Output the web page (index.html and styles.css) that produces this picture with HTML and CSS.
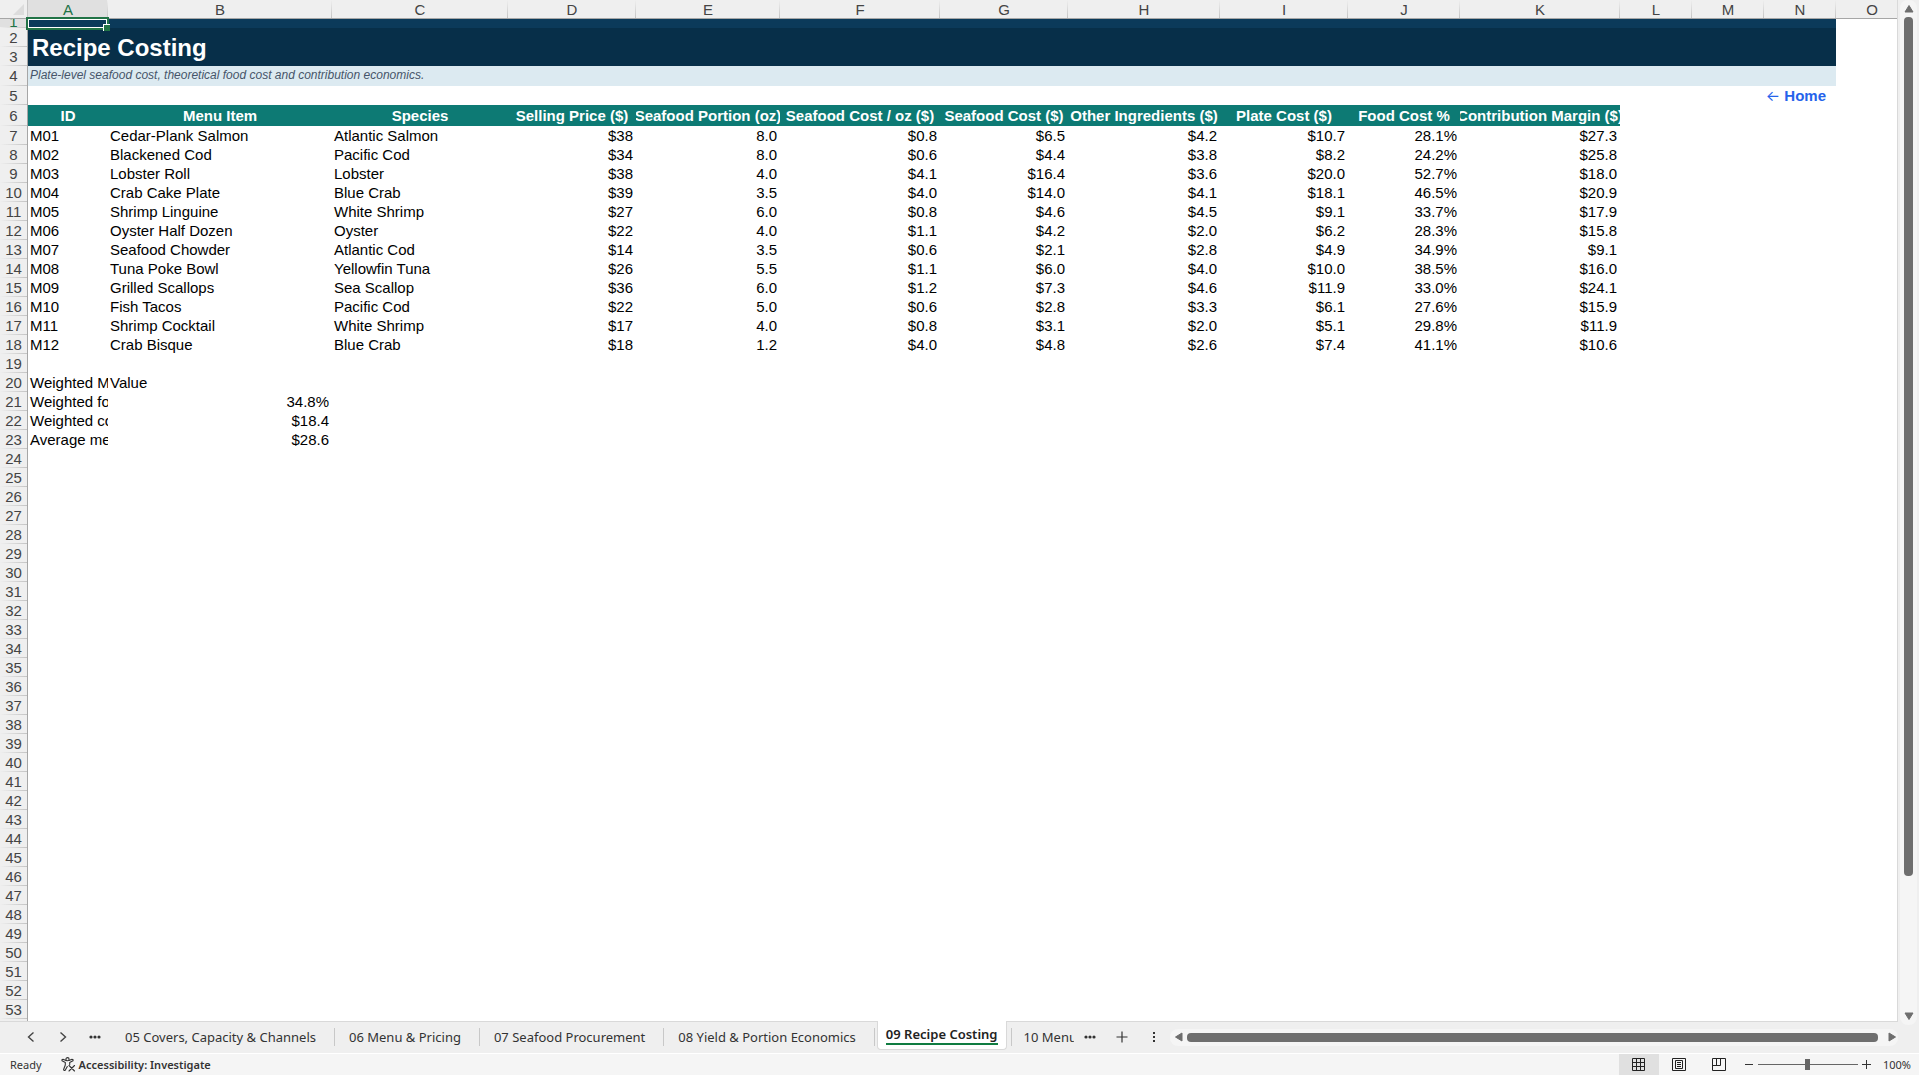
FILE: index.html
```html
<!DOCTYPE html>
<html lang="en">
<head>
    <meta charset="UTF-8">
    <meta name="viewport" content="width=device-width, initial-scale=1.0">
    <title>Recipe Costing</title>
    <link rel="stylesheet" href="styles.css">
</head>
<body>
    <div class="workbook">
        <main class="sheet">
            <table class="grid">
                <colgroup>
                    <col class="w-head"><col class="w-a"><col class="w-b"><col class="w-c"><col class="w-d"><col class="w-e"><col class="w-f"><col class="w-d"><col class="w-h"><col class="w-d"><col class="w-j"><col class="w-f"><col class="w-l"><col class="w-l"><col class="w-l"><col>
                </colgroup>
                <thead>
                    <tr>
                        <th class="corner"><svg width="12" height="12" viewBox="0 0 12 12"><path d="M11 0v11H0z" fill="#dcdcdc"/></svg></th>
                        <th class="active">A</th><th>B</th><th>C</th><th>D</th><th>E</th><th>F</th><th>G</th><th>H</th><th>I</th><th>J</th><th>K</th><th>L</th><th>M</th><th>N</th><th>O</th>
                    </tr>
                </thead>
                <tbody id="rows">
                    <tr class="row-thin">
                        <th class="active"><div>1</div></th>
                        <td class="band cell-active"><div class="selection"></div></td>
                        <td class="band" colspan="13"></td>
                        <td></td>
                    </tr>
                    <tr>
                        <th>2</th>
                        <td class="title" colspan="14" rowspan="2"><h1>Recipe Costing</h1></td>
                        <td></td>
                    </tr>
                    <tr><th>3</th><td></td></tr>
                    <tr class="row-sub">
                        <th>4</th>
                        <td class="subtitle" colspan="14">Plate-level seafood cost, theoretical food cost and contribution economics.</td>
                        <td></td>
                    </tr>
                    <tr>
                        <th>5</th>
                        <td colspan="13"></td>
                        <td class="home"><a href="#home"><span class="arrow">←</span> Home</a></td>
                        <td></td>
                    </tr>
                    <tr class="row-labels">
                        <th>6</th>
                        <td><div>ID</div></td><td><div>Menu Item</div></td><td><div>Species</div></td><td><div>Selling Price ($)</div></td><td><div>Seafood Portion (oz)</div></td><td><div>Seafood Cost / oz ($)</div></td><td><div>Seafood Cost ($)</div></td><td><div>Other Ingredients ($)</div></td><td><div>Plate Cost ($)</div></td><td><div>Food Cost %</div></td><td><div>Contribution Margin ($)</div></td>
                    </tr>
                </tbody>
            </table>
        </main>

        <div class="vscroll">
            <svg width="10" height="8" viewBox="0 0 10 8"><path d="M5 0.5L9 7H1z" fill="#6e6e6e" stroke="#6e6e6e" stroke-linejoin="round"/></svg>
            <div class="vthumb"></div>
            <div class="vrest"></div>
            <svg width="10" height="8" viewBox="0 0 10 8"><path d="M1 1h8L5 7.5z" fill="#6e6e6e" stroke="#6e6e6e" stroke-linejoin="round"/></svg>
        </div>

        <div class="tabbar">
            <div class="tab-nav">
                <button aria-label="Previous sheet"><svg width="10" height="12" viewBox="0 0 10 12"><path d="M7.500 1.500L2.500 6l5 4.500" fill="none" stroke="#444" stroke-width="1.400"/></svg></button>
                <button aria-label="Next sheet"><svg width="10" height="12" viewBox="0 0 10 12"><path d="M2.500 1.500L7.500 6l-5 4.500" fill="none" stroke="#444" stroke-width="1.400"/></svg></button>
                <button aria-label="More sheets"><svg width="12" height="4" viewBox="0 0 12 4" fill="#333"><circle cx="2" cy="2" r="1.600"/><circle cx="6" cy="2" r="1.600"/><circle cx="10" cy="2" r="1.600"/></svg></button>
            </div>
            <nav class="tabs">
                <a class="tab" href="#s05">05 Covers, Capacity &amp; Channels</a>
                <a class="tab" href="#s06">06 Menu &amp; Pricing</a>
                <a class="tab" href="#s07">07 Seafood Procurement</a>
                <a class="tab" href="#s08">08 Yield &amp; Portion Economics</a>
                <a class="tab current" href="#s09"><span>09 Recipe Costing</span></a>
                <a class="tab last" href="#s10"><span>10 Menu Engineering</span></a>
            </nav>
            <div class="tab-tools">
                <button aria-label="More tabs"><svg width="12" height="4" viewBox="0 0 12 4" fill="#333"><circle cx="2" cy="2" r="1.600"/><circle cx="6" cy="2" r="1.600"/><circle cx="10" cy="2" r="1.600"/></svg></button>
                <button aria-label="New sheet"><svg width="12" height="12" viewBox="0 0 12 12"><path d="M6 .5v11M.5 6h11" stroke="#333" stroke-width="1.200"/></svg></button>
                <button aria-label="Resize tabs"><svg width="4" height="12" viewBox="0 0 4 12" fill="#333"><path d="M1 1h2v2H1zM1 5h2v2H1zM1 9h2v2H1z"/></svg></button>
            </div>
            <div class="hscroll">
                <svg width="8" height="10" viewBox="0 0 8 10"><path d="M.5 5L7 1v8z" fill="#6e6e6e" stroke="#6e6e6e" stroke-linejoin="round"/></svg>
                <div class="hthumb"></div>
                <svg width="8" height="10" viewBox="0 0 8 10"><path d="M7.500 5L1 1v8z" fill="#6e6e6e" stroke="#6e6e6e" stroke-linejoin="round"/></svg>
            </div>
        </div>
    </div>

    <footer class="status">
        <span class="ready">Ready</span>
        <button class="access">
            <svg width="15" height="15" viewBox="0 0 15 15" fill="none" stroke="#333" stroke-width="1.100" stroke-linecap="round" stroke-linejoin="round"><circle cx="6.500" cy="2.200" r="1.600"/><path d="M5 3.500L2 2.300Q.6 2.300 1 3.700L4.300 5.400V8L2.600 12.500Q3 14 4.200 13.300L6.300 9.500M8 3.500l3-1.200q1.500 0 1 1.400L8.700 5.400v2M8 8.500l5.500 5.500M13.500 8.500L8 14"/></svg>
            Accessibility: Investigate
        </button>
        <div class="views">
            <button class="on" aria-label="Normal"><svg width="14" height="14" viewBox="0 0 14 14" fill="none" stroke="#222"><path d="M.5.500h12v12H.5zM4.500.500v12M8.500.500v12M.5 4.500h12M.5 8.500h12"/></svg></button>
            <button aria-label="Page layout"><svg width="14" height="14" viewBox="0 0 14 14" fill="none" stroke="#222"><path d="M.5.500h13v12H.5zM3.500 2.500h7v8h-7zM5 4.500h4M5 6.500h4M5 8.500h4"/></svg></button>
            <button aria-label="Page break preview"><svg width="14" height="14" viewBox="0 0 14 14" fill="none" stroke="#222"><path d="M.5.500h13v12H.5zM4.500.500v7M8.500.500v7M.5 7.500h8"/></svg></button>
        </div>
        <div class="zoom">
            <button aria-label="Zoom out"><svg width="9" height="9" viewBox="0 0 9 9"><path d="M0 4.500h8" stroke="#333"/></svg></button>
            <input type="range" min="0" max="100" value="50" aria-label="Zoom">
            <button aria-label="Zoom in"><svg width="9" height="9" viewBox="0 0 9 9"><path d="M0 4.500h9M4.500 0v9" stroke="#333"/></svg></button>
            <span>100%</span>
        </div>
    </footer>

    <script src="sheet.js"></script>
</body>
</html>
```
FILE: styles.css
```css
* {
    margin: 0;
    padding: 0;
    box-sizing: border-box;
}

body {
    display: flex;
    flex-direction: column;
    height: 100vh;
    overflow: hidden;
    background: #f5f5f5;
    color: #000;
    font-family: "Liberation Sans", Arial, sans-serif;
    font-size: 15px;
}

button {
    display: flex;
    align-items: center;
    justify-content: center;
    border: none;
    background: none;
    font: inherit;
    color: inherit;
}

a {
    color: inherit;
    text-decoration: none;
}

.workbook {
    flex: 1;
    min-height: 0;
    display: grid;
    grid-template-columns: minmax(0, 1fr) 21px;
    grid-template-rows: minmax(0, 1fr) 32px;
    background: #efefef;
    border-bottom: 1px solid #fff;
}

.sheet {
    overflow: hidden;
    background: #fff;
    border-right: 1px solid #d9d9d9;
}

/* grid, the last column runs on under the scrollbar */
.grid {
    width: calc(100% + 11px);
    table-layout: fixed;
    border-collapse: separate;
    border-spacing: 0;
    white-space: nowrap;
}

.w-head { width: 28px; }
.w-a { width: 80px; }
.w-b { width: 224px; }
.w-c { width: 176px; }
.w-d { width: 128px; }
.w-e { width: 144px; }
.w-f { width: 160px; }
.w-h { width: 152px; }
.w-j { width: 112px; }
.w-l { width: 72px; }

.grid tr {
    height: 19px;
}

.grid td {
    height: 19px;
    padding: 0 3px 0 2px;
    line-height: 17px;
    overflow: hidden;
}

.grid th {
    font-weight: normal;
    color: #444;
    line-height: 18px;
    overflow: hidden;
}

.grid thead th {
    padding-top: 2px;
    line-height: 16px;
    border-bottom: 1px solid #a6a6a6;
    background: linear-gradient(#efefef, #c4c4c4) right / 1px 100% no-repeat #efefef;
}

.grid thead .corner {
    border-right: 1px solid #c4c4c4;
    background: #efefef;
}

.corner svg {
    display: block;
    margin: 0 2px 0 auto;
}

.grid tbody th {
    border-right: 1px solid #a6a6a6;
    background: linear-gradient(to right, #efefef, #c4c4c4) bottom / 100% 1px no-repeat #efefef;
}

.grid thead .active,
.grid tbody .active {
    background-color: #e0e0e0;
    color: #217346;
}

.grid .row-thin,
.grid .row-thin td {
    height: 9px;
    line-height: 0;
}

.row-thin th div {
    height: 9px;
    display: flex;
    align-items: flex-end;
    justify-content: center;
    line-height: 12px;
    overflow: hidden;
}

.band {
    background: #0b3a5a;
}

.grid .cell-active {
    position: relative;
    overflow: visible;
}

.selection {
    position: absolute;
    inset: -2px -1px -2px -2px;
    border: 2px solid #217346;
    outline: 1px solid #fff;
    outline-offset: -3px;
}

.selection::after {
    content: "";
    position: absolute;
    right: -3px;
    bottom: -3px;
    width: 6px;
    height: 6px;
    background: #217346;
    border-top: 1px solid #fff;
    border-left: 1px solid #fff;
}

.grid .title {
    padding: 2px 4px 0;
    background: #072f49;
    color: #fff;
}

.title h1 {
    font-size: 24px;
    line-height: 36px;
}

.grid .row-sub td {
    height: 20px;
}

.grid .subtitle {
    background: #dceaf1;
    color: #475569;
    font-size: 12px;
    font-style: italic;
    line-height: 19px;
    vertical-align: top;
}

.grid .home {
    padding: 0 10px 0 0;
    text-align: right;
    color: #2563eb;
    font-weight: bold;
}

.arrow {
    font-family: Inter, sans-serif;
    font-weight: normal;
    line-height: 1;
}

.grid .row-labels td {
    height: 21px;
    padding: 0;
    background: #0d7a74;
    color: #fff;
    font-weight: bold;
}

.row-labels div {
    display: flex;
    justify-content: center;
    overflow: hidden;
}

.grid .num {
    text-align: right;
}

/* scrollbars */
.vscroll {
    grid-column: 2;
    grid-row: 1 / 3;
    display: flex;
    flex-direction: column;
    align-items: center;
    width: 17px;
    margin: 0 2px 28px;
    padding: 5px 0;
    border-radius: 8px;
    background: #f5f5f5;
}

.vthumb {
    flex: 858;
    width: 9px;
    margin-top: 4px;
    border-radius: 4px;
    background: #6e6e6e;
}

.vrest {
    flex: 136;
}

.hscroll {
    flex: 1;
    display: flex;
    align-items: center;
    height: 17px;
    padding: 0 2px 0 5px;
    border-radius: 8px;
    background: #f5f5f5;
}

.hthumb {
    flex: 1;
    height: 9px;
    margin: 0 10px 0 4px;
    border-radius: 4px;
    background: #6e6e6e;
}

/* sheet tabs */
.tabbar {
    grid-column: 1;
    grid-row: 2;
    display: flex;
    align-items: center;
    padding-bottom: 1px;
    border-top: 1px solid #d9d9d9;
    font-family: "Noto Sans", "Open Sans", sans-serif;
    font-size: 13px;
    color: #333;
}

.tab-nav {
    display: flex;
    padding-left: 15px;
}

.tab-nav button {
    width: 32px;
    height: 24px;
}

.tabs {
    display: flex;
    align-self: stretch;
    align-items: center;
    white-space: nowrap;
}

.tab {
    padding: 0 18px 0 14px;
    border-right: 1px solid #c8c8c8;
    line-height: 18px;
}

.tab.current {
    align-self: flex-start;
    height: 29px;
    margin: -1px 4px 0 2px;
    padding: 4px 8px 0;
    border: 1px solid #d9d9d9;
    border-top: none;
    border-radius: 0 0 4px 4px;
    background: #fff;
    font-weight: 600;
    color: #222;
}

.current span {
    display: block;
    border-bottom: 2px solid #107c41;
}

.tab.last {
    padding: 0 0 0 12px;
    border-left: 1px solid #c8c8c8;
    border-right: none;
}

.last span {
    display: block;
    width: 50px;
    overflow: hidden;
}

.tab-tools {
    display: flex;
}

.tab-tools button {
    width: 32px;
    height: 24px;
}

/* status bar */
.status {
    display: flex;
    align-items: center;
    height: 21px;
    padding: 0 8px 0 10px;
    font-family: "Noto Sans", "Open Sans", sans-serif;
    font-size: 11px;
    color: #333;
}

.access {
    gap: 3px;
    margin-left: 19px;
    font-weight: 600;
}

.views {
    display: flex;
    align-self: stretch;
    margin-left: auto;
}

.views button {
    width: 40px;
}

.views .on {
    background: #e0e0e0;
}

.zoom {
    display: flex;
    align-items: center;
    gap: 4px;
    padding-left: 6px;
}

.zoom span {
    padding-left: 8px;
}

.zoom input {
    width: 100px;
    height: 11px;
    appearance: none;
    background: linear-gradient(#666, #666) center / 100% 1px no-repeat;
}

.zoom input::-webkit-slider-thumb {
    appearance: none;
    width: 5px;
    height: 11px;
    background: #666;
}
```
FILE: sheet.js
```js
const LAST_ROW = 54;

const dishes = [
    ['M01', 'Cedar-Plank Salmon', 'Atlantic Salmon', '$38', '8.0', '$0.8', '$6.5', '$4.2', '$10.7', '28.1%', '$27.3'],
    ['M02', 'Blackened Cod', 'Pacific Cod', '$34', '8.0', '$0.6', '$4.4', '$3.8', '$8.2', '24.2%', '$25.8'],
    ['M03', 'Lobster Roll', 'Lobster', '$38', '4.0', '$4.1', '$16.4', '$3.6', '$20.0', '52.7%', '$18.0'],
    ['M04', 'Crab Cake Plate', 'Blue Crab', '$39', '3.5', '$4.0', '$14.0', '$4.1', '$18.1', '46.5%', '$20.9'],
    ['M05', 'Shrimp Linguine', 'White Shrimp', '$27', '6.0', '$0.8', '$4.6', '$4.5', '$9.1', '33.7%', '$17.9'],
    ['M06', 'Oyster Half Dozen', 'Oyster', '$22', '4.0', '$1.1', '$4.2', '$2.0', '$6.2', '28.3%', '$15.8'],
    ['M07', 'Seafood Chowder', 'Atlantic Cod', '$14', '3.5', '$0.6', '$2.1', '$2.8', '$4.9', '34.9%', '$9.1'],
    ['M08', 'Tuna Poke Bowl', 'Yellowfin Tuna', '$26', '5.5', '$1.1', '$6.0', '$4.0', '$10.0', '38.5%', '$16.0'],
    ['M09', 'Grilled Scallops', 'Sea Scallop', '$36', '6.0', '$1.2', '$7.3', '$4.6', '$11.9', '33.0%', '$24.1'],
    ['M10', 'Fish Tacos', 'Pacific Cod', '$22', '5.0', '$0.6', '$2.8', '$3.3', '$6.1', '27.6%', '$15.9'],
    ['M11', 'Shrimp Cocktail', 'White Shrimp', '$17', '4.0', '$0.8', '$3.1', '$2.0', '$5.1', '29.8%', '$11.9'],
    ['M12', 'Crab Bisque', 'Blue Crab', '$18', '1.2', '$4.0', '$4.8', '$2.6', '$7.4', '41.1%', '$10.6']
];

const summary = [
    ['Weighted Metric', 'Value'],
    ['Weighted food cost %', '34.8%'],
    ['Weighted contribution', '$18.4'],
    ['Average menu price', '$28.6']
];

const data = [...dishes, [], ...summary];
const body = document.getElementById('rows');

for (let n = 7; n <= LAST_ROW; n++) {
    const row = body.insertRow();
    const head = document.createElement('th');
    head.textContent = n;
    row.appendChild(head);

    (data[n - 7] || []).forEach(value => {
        const cell = row.insertCell();
        cell.textContent = value;
        if (/^\$?[\d.]+%?$/.test(value)) {
            cell.className = 'num';
        }
    });
}
```
